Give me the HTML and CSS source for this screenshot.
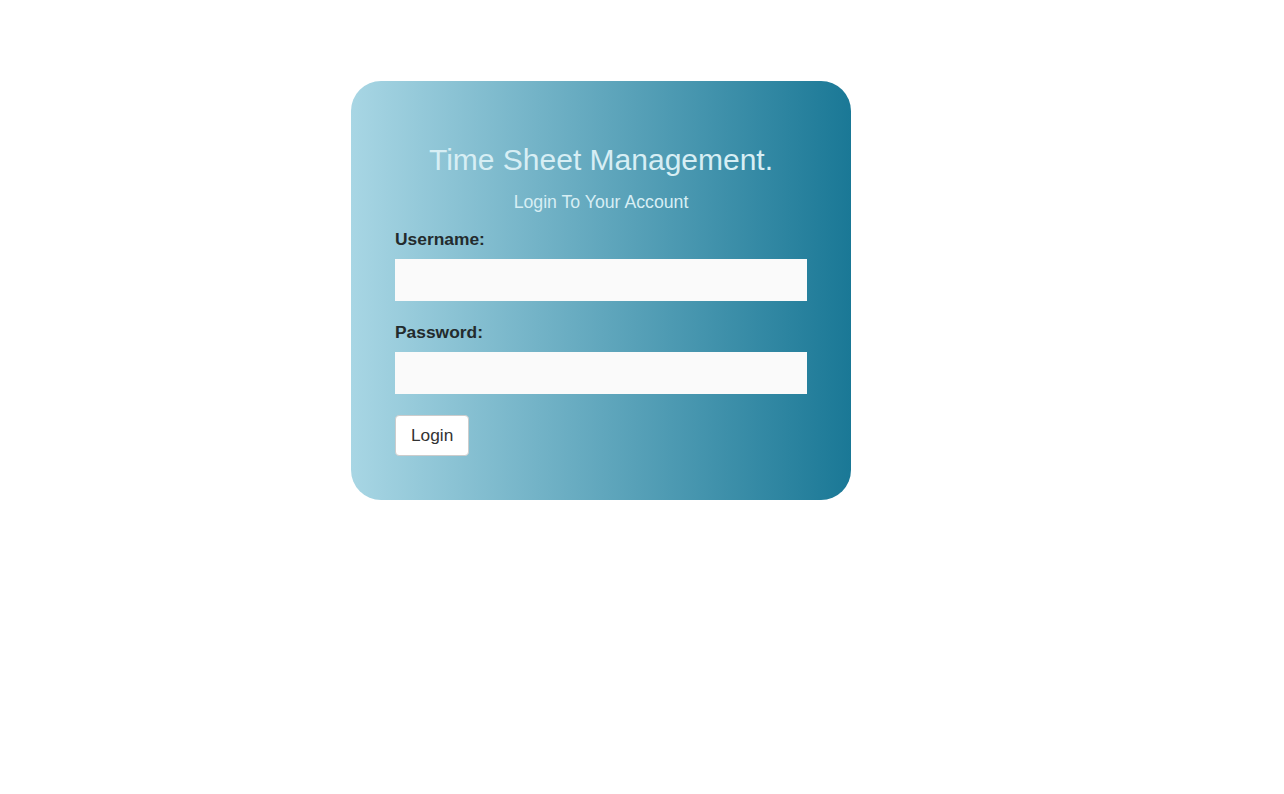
FILE: index.html
```html
<!DOCTYPE html>
<html>
<head>
<meta charset="utf-8">
<link rel="stylesheet" href="styles.css">
</head>
<body>
<div class="card">
  <h1 class="title">Time Sheet Management.</h1>
  <p class="subtitle">Login To Your Account</p>
  <form class="form">
    <div class="field">
      <label class="label">Username:</label>
      <input class="input" type="text">
    </div>
    <div class="field">
      <label class="label">Password:</label>
      <input class="input" type="password">
    </div>
    <button class="btn" type="button">Login</button>
  </form>
</div>
</body>
</html>
```
FILE: styles.css
```css
html, body {
  margin: 0;
  padding: 0;
  background: #fff;
  font-family: "Liberation Sans", Arial, sans-serif;
}
.card {
  box-sizing: border-box;
  width: 500px;
  height: 419px;
  margin: 81px 0 0 351px;
  padding: 60px 44px 44px;
  border-radius: 30px;
  background: linear-gradient(to right, #a8d6e4 0%, #1a7896 100%);
}
.title {
  margin: 0;
  text-align: center;
  font-weight: normal;
  font-size: 30px;
  line-height: 38px;
  color: #d7eef4;
}
.subtitle {
  margin: 11px 0 0;
  text-align: center;
  font-size: 17.7px;
  line-height: 24px;
  color: #d7eef4;
}
.form {
  margin-top: 13px;
}
.field {
  display: flex;
  flex-direction: column;
  margin-bottom: 19px;
}
.label {
  font-weight: bold;
  font-size: 17.4px;
  line-height: 24px;
  color: #232b2d;
  margin-bottom: 8px;
}
.input {
  box-sizing: border-box;
  width: 412px;
  height: 42px;
  border: none;
  background: #fafafa;
  margin: 0;
}
.input-tall {
  height: 43px;
}
.btn {
  box-sizing: border-box;
  height: 41px;
  padding: 0 15px;
  font-family: "Liberation Sans", Arial, sans-serif;
  font-size: 17.3px;
  color: #333;
  background: #fff;
  border: 1px solid #ccc;
  border-radius: 4px;
  margin-top: 2px;
}
```
